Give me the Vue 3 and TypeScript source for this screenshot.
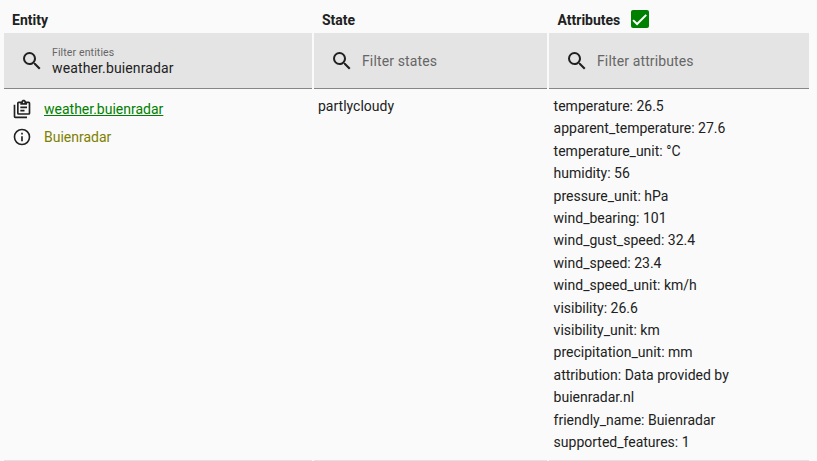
<script setup lang="ts">
interface Column {
  key: string
  title: string
  label: string
  value: string
}

const columns: Column[] = [
  { key: 'entity', title: 'Entity', label: 'Filter entities', value: 'weather.buienradar' },
  { key: 'state', title: 'State', label: 'Filter states', value: '' },
  { key: 'attributes', title: 'Attributes', label: 'Filter attributes', value: '' },
]

const attributes: [string, string][] = [
  ['temperature', '26.5'],
  ['apparent_temperature', '27.6'],
  ['temperature_unit', '°C'],
  ['humidity', '56'],
  ['pressure_unit', 'hPa'],
  ['wind_bearing', '101'],
  ['wind_gust_speed', '32.4'],
  ['wind_speed', '23.4'],
  ['wind_speed_unit', 'km/h'],
  ['visibility', '26.6'],
  ['visibility_unit', 'km'],
  ['precipitation_unit', 'mm'],
  ['attribution', 'Data provided by buienradar.nl'],
  ['friendly_name', 'Buienradar'],
  ['supported_features', '1'],
]
</script>

<template>
  <main class="states">
    <div v-for="col in columns" :key="col.key" class="head" :class="col.key">
      <span>{{ col.title }}</span>
      <span v-if="col.key === 'attributes'" class="checkbox">
        <svg viewBox="0 0 24 24"><path d="M1.73 12.91 8.1 19.28 22.79 4.59" /></svg>
      </span>
    </div>

    <label v-for="col in columns" :key="col.label" class="filter">
      <svg class="search" viewBox="0 0 24 24">
        <path d="M9.5 3A6.5 6.5 0 0 1 16 9.5C16 11.11 15.41 12.59 14.44 13.73L14.71 14H15.5L20.5 19L19 20.5L14 15.5V14.71L13.73 14.44C12.59 15.41 11.11 16 9.5 16A6.5 6.5 0 0 1 9.5 3M9.5 5C7 5 5 7 5 9.5S7 14 9.5 14 14 12 14 9.5 12 5 9.5 5Z" />
      </svg>
      <span class="field">
        <span :class="col.value ? 'label-small' : 'label'">{{ col.label }}</span>
        <span v-if="col.value" class="value">{{ col.value }}</span>
      </span>
    </label>

    <div class="cell entity-cell">
      <div class="line">
        <svg class="icon" viewBox="0 0 24 24">
          <path fill-rule="evenodd" d="M4 7V21H18V23H4A2 2 0 0 1 2 21V7H4M20 3A2 2 0 0 1 22 5V17A2 2 0 0 1 20 19H8A2 2 0 0 1 6 17V5A2 2 0 0 1 8 3H11.18C11.6 1.84 12.7 1 14 1S16.4 1.84 16.82 3H20M14 3A1 1 0 0 0 13 4A1 1 0 0 0 14 5A1 1 0 0 0 15 4A1 1 0 0 0 14 3M10 7V5H8V17H20V5H18V7H10M10 9H18V11H10V9M10 13H15V15H10V13Z" />
        </svg>
        <a class="link">weather.buienradar</a>
      </div>
      <div class="line">
        <svg class="icon" viewBox="0 0 24 24">
          <path d="M11 9H13V7H11M12 20C7.59 20 4 16.41 4 12S7.59 4 12 4 20 7.59 20 12 16.41 20 12 20M12 2A10 10 0 0 0 2 12A10 10 0 0 0 12 22A10 10 0 0 0 22 12A10 10 0 0 0 12 2M11 17H13V11H11V17Z" />
        </svg>
        <span class="name">Buienradar</span>
      </div>
    </div>
    <div class="cell">partlycloudy</div>
    <div class="cell attributes-cell">
      <div v-for="[key, value] in attributes" :key="key">{{ key }}: {{ value }}</div>
    </div>
  </main>
</template>

<style>
body {
  margin: 0;
  background: #fafafa;
}
</style>

<style scoped>
.states {
  display: grid;
  grid-template-columns: 308px 233px 260px;
  grid-template-rows: 33px 56px 372px;
  column-gap: 2px;
  box-sizing: border-box;
  width: 817px;
  height: 461px;
  padding-left: 4px;
  overflow: hidden;
  font-family: Roboto, sans-serif;
  font-size: 14px;
  line-height: 22.4px;
  color: #212121;
}
.head {
  display: flex;
  align-items: flex-start;
  gap: 10.5px;
  padding: 9px 8px 0;
  font-weight: 700;
}
.head.attributes {
  padding-left: 8.5px;
}
.checkbox {
  display: flex;
  box-sizing: border-box;
  width: 18px;
  height: 18px;
  margin-top: 1px;
  padding: 1.5px;
  border-radius: 2px;
  background: #008000;
}
.checkbox svg {
  width: 15px;
  height: 15px;
  fill: none;
  stroke: #fff;
  stroke-width: 3.12;
}
.filter {
  display: flex;
  align-items: center;
  gap: 8px;
  box-sizing: border-box;
  padding-left: 16px;
  background: #e4e4e4;
  border-bottom: 1px solid #868686;
  letter-spacing: 0.131px;
}
.search {
  width: 24px;
  height: 24px;
  fill: #212121;
}
.field {
  display: flex;
  flex-direction: column;
}
.label {
  padding-top: 2px;
  color: #666;
}
.label-small {
  padding-top: 1px;
  font-size: 10.5px;
  line-height: 14px;
  color: #666;
}
.value {
  line-height: 17px;
}
.cell {
  box-sizing: border-box;
  padding: 6px 4px 0;
  border-bottom: 1px solid #e1e1e1;
}
.attributes-cell {
  padding-left: 4.6px;
  padding-right: 60px;
}
.entity-cell {
  display: flex;
  flex-direction: column;
  gap: 8px;
  padding: 10px 8px 0;
}
.line {
  display: flex;
  align-items: center;
  gap: 12px;
  height: 20px;
}
.icon {
  width: 20px;
  height: 20px;
  fill: #212121;
}
.link {
  color: #008000;
  text-decoration: underline;
}
.name {
  color: #808000;
}
</style>
